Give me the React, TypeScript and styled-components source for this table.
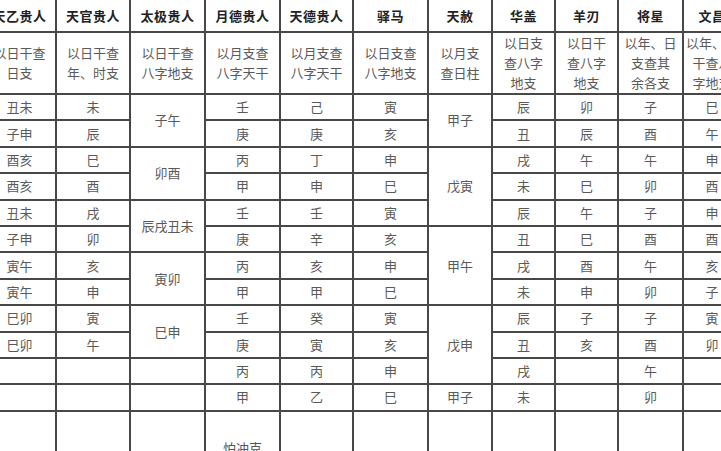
import React from "react";
import styled, { createGlobalStyle } from "styled-components";

const GlobalStyle = createGlobalStyle`
  html, body {
    margin: 0;
    padding: 0;
    background: #ffffff;
    overflow: hidden;
  }
  body {
    width: 721px;
    height: 451px;
    font-family: "Noto Sans CJK SC", "Noto Sans", sans-serif;
  }
`;

const Page = styled.div`
  width: 721px;
  height: 451px;
  overflow: hidden;
  background: #fff;
`;

const Table = styled.table`
  border-collapse: collapse;
  table-layout: fixed;
  margin: -2px 0 0 -18px;
  width: 758px;
  font-size: 13px;
  color: #555;
`;

const HeadRow = styled.tr`
  height: 33px;
`;

const DescRow = styled.tr`
  height: 60px;
`;

const DataRow = styled.tr`
  height: 26.4px;
`;

const TallRow = styled.tr`
  height: 90px;
`;

const Th = styled.th`
  border: 2px solid #484848;
  font-weight: 700;
  color: #222;
  text-align: center;
  vertical-align: middle;
  padding: 0;
  white-space: nowrap;
  overflow: hidden;
  letter-spacing: 0.5px;
`;

const Td = styled.td`
  border: 2px solid #484848;
  text-align: center;
  vertical-align: middle;
  padding: 0;
  white-space: nowrap;
  overflow: hidden;
  font-weight: 400;
  line-height: 20px;
  color: #5a5a5a;
`;

const Note = styled.div`
  padding-top: 26px;
  line-height: 20px;
  color: #555;
`;

const widths = [73, 74, 75, 75, 73, 75, 64, 63, 63, 65, 58];

const headers = [
  "天乙贵人",
  "天官贵人",
  "太极贵人",
  "月德贵人",
  "天德贵人",
  "驿马",
  "天赦",
  "华盖",
  "羊刃",
  "将星",
  "文昌",
];

const descs = [
  ["以日干查", "日支"],
  ["以日干查", "年、时支"],
  ["以日干查", "八字地支"],
  ["以月支查", "八字天干"],
  ["以月支查", "八字天干"],
  ["以日支查", "八字地支"],
  ["以月支", "查日柱"],
  ["以日支", "查八字", "地支"],
  ["以日干", "查八字", "地支"],
  ["以年、日", "支查其", "余各支"],
  ["以年、日", "干查八", "字地支"],
];

const tianyi = ["丑未", "子申", "酉亥", "酉亥", "丑未", "子申", "寅午", "寅午", "巳卯", "巳卯", "", ""];
const tianguan = ["未", "辰", "巳", "酉", "戌", "卯", "亥", "申", "寅", "午", "", ""];
const yuede = ["壬", "庚", "丙", "甲", "壬", "庚", "丙", "甲", "壬", "庚", "丙", "甲"];
const tiande = ["己", "庚", "丁", "申", "壬", "辛", "亥", "甲", "癸", "寅", "丙", "乙"];
const yima = ["寅", "亥", "申", "巳", "寅", "亥", "申", "巳", "寅", "亥", "申", "巳"];
const huagai = ["辰", "丑", "戌", "未", "辰", "丑", "戌", "未", "辰", "丑", "戌", "未"];
const yangren = ["卯", "辰", "午", "巳", "午", "巳", "酉", "申", "子", "亥", "", ""];
const jiangxing = ["子", "酉", "午", "卯", "子", "酉", "午", "卯", "子", "酉", "午", "卯"];
const wenchang = ["巳", "午", "申", "酉", "申", "酉", "亥", "子", "寅", "卯", "", ""];

// row index -> [text, rowSpan] where a group starts
const taiji: Record<number, [string, number]> = {
  0: ["子午", 2],
  2: ["卯酉", 2],
  4: ["辰戌丑未", 2],
  6: ["寅卯", 2],
  8: ["巳申", 2],
  10: ["", 1],
  11: ["", 1],
};

const tianshe: Record<number, [string, number]> = {
  0: ["甲子", 2],
  2: ["戊寅", 3],
  5: ["甲午", 3],
  8: ["戊申", 3],
  11: ["甲子", 1],
};

const App: React.FC = () => {
  const rows = Array.from({ length: 12 }, (_, i) => i);

  return (
    <Page>
      <GlobalStyle />
      <Table>
        <colgroup>
          {widths.map((w, i) => (
            <col key={i} style={{ width: w }} />
          ))}
        </colgroup>
        <tbody>
          <HeadRow>
            {headers.map((h) => (
              <Th key={h}>{h}</Th>
            ))}
          </HeadRow>
          <DescRow>
            {descs.map((lines, i) => (
              <Td key={i}>
                {lines.map((l, j) => (
                  <React.Fragment key={j}>
                    {j > 0 && <br />}
                    {l}
                  </React.Fragment>
                ))}
              </Td>
            ))}
          </DescRow>
          {rows.map((i) => (
            <DataRow key={i}>
              <Td>{tianyi[i]}</Td>
              <Td>{tianguan[i]}</Td>
              {taiji[i] && <Td rowSpan={taiji[i][1]}>{taiji[i][0]}</Td>}
              <Td>{yuede[i]}</Td>
              <Td>{tiande[i]}</Td>
              <Td>{yima[i]}</Td>
              {tianshe[i] && <Td rowSpan={tianshe[i][1]}>{tianshe[i][0]}</Td>}
              <Td>{huagai[i]}</Td>
              <Td>{yangren[i]}</Td>
              <Td>{jiangxing[i]}</Td>
              <Td>{wenchang[i]}</Td>
            </DataRow>
          ))}
          <TallRow>
            <Td />
            <Td />
            <Td />
            <Td style={{ verticalAlign: "top" }}>
              <Note>
                怕冲克
                <br />
                逢之则减
              </Note>
            </Td>
            <Td />
            <Td />
            <Td />
            <Td />
            <Td />
            <Td />
            <Td />
          </TallRow>
        </tbody>
      </Table>
    </Page>
  );
};

export default App;
